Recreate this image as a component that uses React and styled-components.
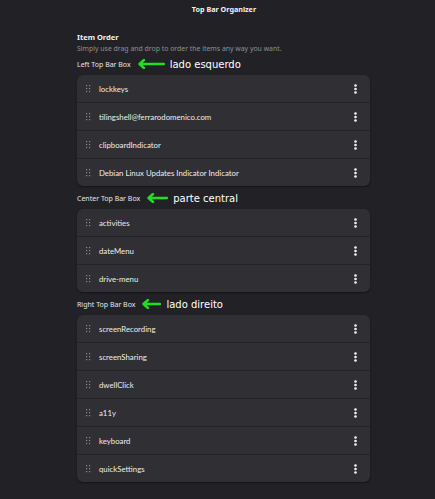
import React from 'react';
import styled, { createGlobalStyle } from 'styled-components';

const Global = createGlobalStyle`
  html, body {
    margin: 0;
    padding: 0;
    background: #222226;
  }
  body {
    font-family: "Noto Sans", "Open Sans", sans-serif;
    color: #ffffff;
  }
`;

const Page = styled.div`
  width: 435px;
  height: 499px;
  background: #222226;
  overflow: hidden;
`;

const Header = styled.div`
  height: 18px;
  display: flex;
  align-items: center;
  justify-content: center;
  padding-left: 13px;
  font-size: 7.2px;
  font-weight: 700;
  color: #f2f2f2;
`;

const Content = styled.div`
  width: 293px;
  margin: 13px 0 0 77px;
  display: flex;
  flex-direction: column;
`;

const GroupTitle = styled.div`
  font-size: 7.5px;
  font-weight: 700;
  line-height: 12px;
  color: #f0f0f0;
`;

const GroupHint = styled.div`
  font-size: 6.9px;
  line-height: 12px;
  color: #8e8e92;
  margin-bottom: 2px;
`;

const SectionLabel = styled.div`
  display: flex;
  align-items: center;
  height: 14px;
  margin-bottom: 4px;
  font-size: 7px;
  color: #e6e6e6;
`;

const Note = styled.span`
  font-family: "DejaVu Sans", sans-serif;
  font-size: 10px;
  color: #ffffff;
  margin-left: 5px;
`;

const Card = styled.div`
  background: #303034;
  border-radius: 6px;
  box-shadow: 0 1px 2px rgba(0, 0, 0, 0.45);
  margin-bottom: 5px;
  overflow: hidden;
`;

const Row = styled.div`
  height: 27px;
  display: flex;
  align-items: center;
  padding: 0 13px 0 9px;
  font-family: "Lato", "Noto Sans", sans-serif;
  font-size: 7.8px;
  color: #ececec;
  & + & {
    border-top: 1px solid #242428;
  }
`;

const Name = styled.span`
  flex: 1;
  margin-left: 8px;
`;

function Arrow({ width = 28 }) {
  return (
    <svg width={width} height="10" viewBox={`0 0 ${width} 10`} style={{ marginLeft: 6 }}>
      <path
        d={`M${width - 1} 5 H3 M7 1 L2.5 5 L7 9`}
        fill="none"
        stroke="#1fe01f"
        strokeWidth="2.4"
        strokeLinecap="round"
        strokeLinejoin="round"
      />
    </svg>
  );
}

function Handle() {
  const dots = [];
  for (let r = 0; r < 3; r++) {
    for (let c = 0; c < 2; c++) {
      dots.push(<rect key={`${r}-${c}`} x={c * 3} y={r * 3} width="1.2" height="1.2" fill="#8a8a8e" />);
    }
  }
  return (
    <svg width="5" height="8" viewBox="0 0 5 8">
      {dots}
    </svg>
  );
}

function Menu() {
  return (
    <svg width="3" height="10" viewBox="0 0 3 10">
      <circle cx="1.5" cy="1.5" r="1.3" fill="#f5f5f5" />
      <circle cx="1.5" cy="5" r="1.3" fill="#f5f5f5" />
      <circle cx="1.5" cy="8.5" r="1.3" fill="#f5f5f5" />
    </svg>
  );
}

const sections = [
  {
    label: 'Left Top Bar Box',
    note: 'lado esquerdo',
    arrow: 28,
    items: [
      'lockkeys',
      'tilingshell@ferrarodomenico.com',
      'clipboardIndicator',
      'Debian Linux Updates Indicator Indicator',
    ],
  },
  {
    label: 'Center Top Bar Box',
    note: 'parte central',
    arrow: 22,
    items: ['activities', 'dateMenu', 'drive-menu'],
  },
  {
    label: 'Right Top Bar Box',
    note: 'lado direito',
    arrow: 20,
    items: ['screenRecording', 'screenSharing', 'dwellClick', 'a11y', 'keyboard', 'quickSettings'],
  },
];

export default function App() {
  return (
    <Page>
      <Global />
      <Header>Top Bar Organizer</Header>
      <Content>
        <GroupTitle>Item Order</GroupTitle>
        <GroupHint>Simply use drag and drop to order the items any way you want.</GroupHint>
        {sections.map((s) => (
          <React.Fragment key={s.label}>
            <SectionLabel>
              {s.label}
              <Arrow width={s.arrow} />
              <Note>{s.note}</Note>
            </SectionLabel>
            <Card>
              {s.items.map((item) => (
                <Row key={item}>
                  <Handle />
                  <Name>{item}</Name>
                  <Menu />
                </Row>
              ))}
            </Card>
          </React.Fragment>
        ))}
      </Content>
    </Page>
  );
}
